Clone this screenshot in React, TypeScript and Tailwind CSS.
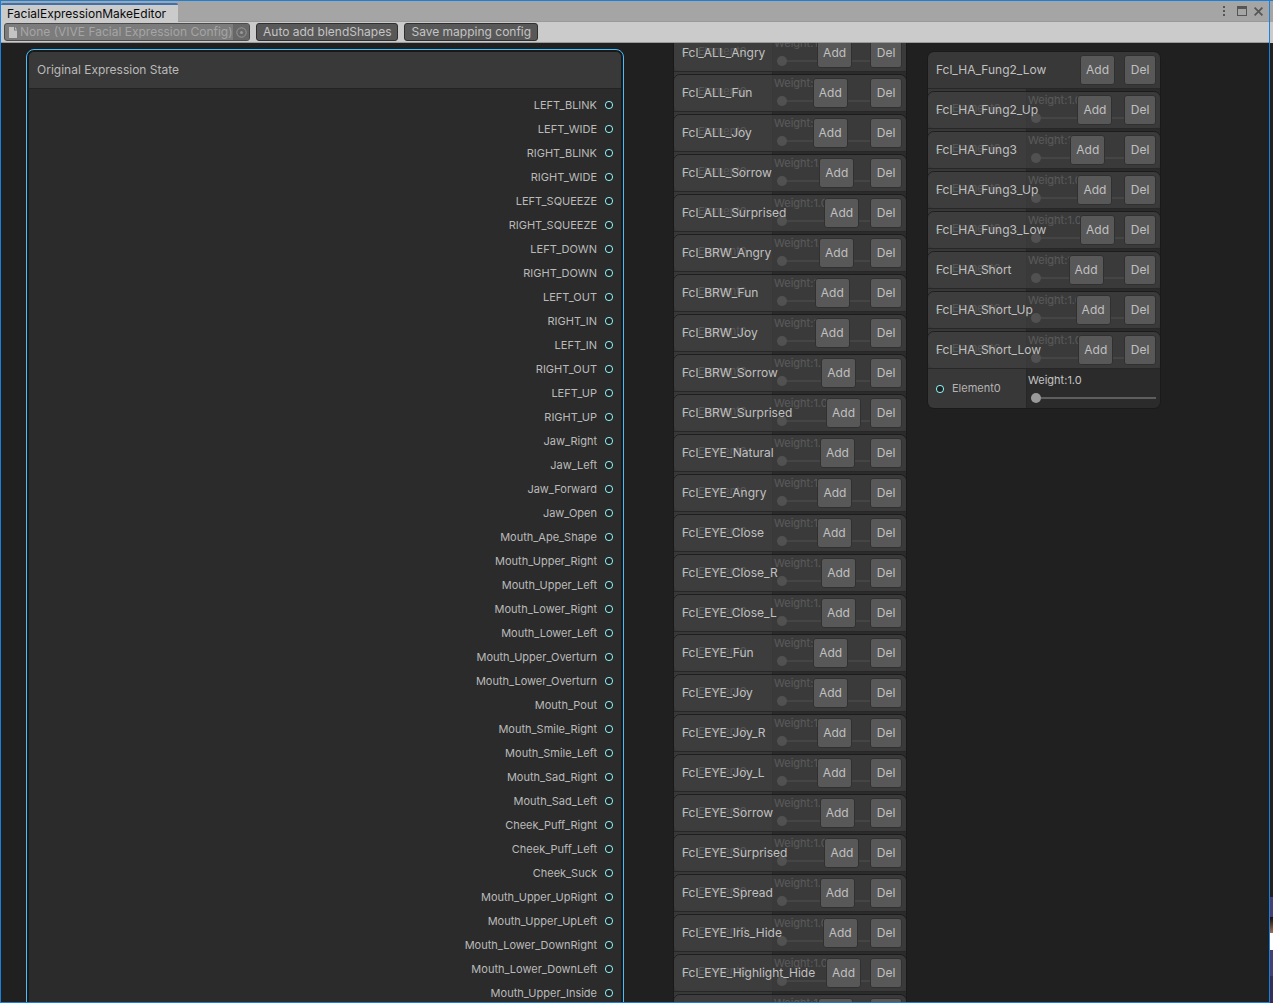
import React from "react";

const expressions = [
  "LEFT_BLINK",
  "LEFT_WIDE",
  "RIGHT_BLINK",
  "RIGHT_WIDE",
  "LEFT_SQUEEZE",
  "RIGHT_SQUEEZE",
  "LEFT_DOWN",
  "RIGHT_DOWN",
  "LEFT_OUT",
  "RIGHT_IN",
  "LEFT_IN",
  "RIGHT_OUT",
  "LEFT_UP",
  "RIGHT_UP",
  "Jaw_Right",
  "Jaw_Left",
  "Jaw_Forward",
  "Jaw_Open",
  "Mouth_Ape_Shape",
  "Mouth_Upper_Right",
  "Mouth_Upper_Left",
  "Mouth_Lower_Right",
  "Mouth_Lower_Left",
  "Mouth_Upper_Overturn",
  "Mouth_Lower_Overturn",
  "Mouth_Pout",
  "Mouth_Smile_Right",
  "Mouth_Smile_Left",
  "Mouth_Sad_Right",
  "Mouth_Sad_Left",
  "Cheek_Puff_Right",
  "Cheek_Puff_Left",
  "Cheek_Suck",
  "Mouth_Upper_UpRight",
  "Mouth_Upper_UpLeft",
  "Mouth_Lower_DownRight",
  "Mouth_Lower_DownLeft",
  "Mouth_Upper_Inside",
];

const faceShapes = [
  "Fcl_ALL_Neutral",
  "Fcl_ALL_Angry",
  "Fcl_ALL_Fun",
  "Fcl_ALL_Joy",
  "Fcl_ALL_Sorrow",
  "Fcl_ALL_Surprised",
  "Fcl_BRW_Angry",
  "Fcl_BRW_Fun",
  "Fcl_BRW_Joy",
  "Fcl_BRW_Sorrow",
  "Fcl_BRW_Surprised",
  "Fcl_EYE_Natural",
  "Fcl_EYE_Angry",
  "Fcl_EYE_Close",
  "Fcl_EYE_Close_R",
  "Fcl_EYE_Close_L",
  "Fcl_EYE_Fun",
  "Fcl_EYE_Joy",
  "Fcl_EYE_Joy_R",
  "Fcl_EYE_Joy_L",
  "Fcl_EYE_Sorrow",
  "Fcl_EYE_Surprised",
  "Fcl_EYE_Spread",
  "Fcl_EYE_Iris_Hide",
  "Fcl_EYE_Highlight_Hide",
  "Fcl_MTH_Close",
];

const teethShapes = [
  "Fcl_HA_Fung2_Low",
  "Fcl_HA_Fung2_Up",
  "Fcl_HA_Fung3",
  "Fcl_HA_Fung3_Up",
  "Fcl_HA_Fung3_Low",
  "Fcl_HA_Short",
  "Fcl_HA_Short_Up",
  "Fcl_HA_Short_Low",
];

function Port() {
  return (
    <svg className="size-2 shrink-0" viewBox="0 0 8 8" aria-hidden="true">
      <circle cx="4" cy="4" r="3.5" fill="#212121" stroke="#84e4e7" strokeWidth="1.1" />
    </svg>
  );
}

// Nodes are taller than their spacing, so each translucent header covers the previous node's body.
function ShapeNode({ name }: { name: string }) {
  return (
    <section className="relative -mb-[38px] overflow-hidden rounded-[7px] border border-[#191919]/80">
      <header className="flex h-[37px] items-center border-b border-[#232323]/80 bg-[#3f3f3f]/80 pr-1 pl-2 text-[#c0c0c0]">
        <h2 className="min-w-0 grow-2 pr-4 whitespace-nowrap">{name}</h2>
        <button
          type="button"
          className="h-[30px] w-[35px] shrink-0 rounded-[3px] border border-[#303030] bg-[#585858]"
        >
          Add
        </button>
        <div className="min-w-[9px] grow" />
        <button
          type="button"
          className="h-[30px] w-8 shrink-0 rounded-[3px] border border-[#303030] bg-[#585858]"
        >
          Del
        </button>
      </header>
      <div className="flex h-[39px]">
        <div className="flex w-[99px] shrink-0 items-center gap-2 border-r border-[#232323]/80 bg-[#3f3f3f]/80 pl-2 text-[11px] text-[#b4b4b4]">
          <Port />
          Element0
        </div>
        <label className="flex min-w-0 grow flex-col bg-[#2e2e2e]/80 pt-[3px] pr-1 pl-px text-[11px]">
          <span className="leading-4">Weight:1.0</span>
          <input
            type="range"
            min="1"
            max="10"
            defaultValue="1"
            className="mt-[5px] ml-[3px] h-[10px] min-w-0 appearance-none bg-transparent [&::-webkit-slider-runnable-track]:h-[2px] [&::-webkit-slider-runnable-track]:bg-[#5e5e5e] [&::-webkit-slider-thumb]:-mt-1 [&::-webkit-slider-thumb]:size-[10px] [&::-webkit-slider-thumb]:appearance-none [&::-webkit-slider-thumb]:rounded-full [&::-webkit-slider-thumb]:bg-[#999999]"
          />
        </label>
      </div>
    </section>
  );
}

function ToolbarButton({ children }: { children: React.ReactNode }) {
  return (
    <button
      type="button"
      className="h-[18px] rounded-[3px] border border-[#303030] bg-[#585858] px-[6px] leading-4 text-[#c4c4c4]"
    >
      {children}
    </button>
  );
}

export default function App() {
  return (
    <div className="flex h-screen overflow-hidden bg-[#202020] font-['Inter',sans-serif] text-[12px] text-[#c4c4c4]">
      <main className="flex min-w-0 grow flex-col border border-[#1a80d9]">
        <div className="flex h-[21px] shrink-0 items-end justify-between border-b border-[#999999] bg-[#a5a5a5]">
          <div role="tablist" className="-mb-px flex">
            <button
              type="button"
              role="tab"
              aria-selected="true"
              className="h-[19px] rounded-t-[2px] border-t-2 border-[#3a72b0] bg-[#cbcbcb] pr-3 pl-[6px] leading-4 text-[#090909]"
            >
              FacialExpressionMakeEditor
            </button>
          </div>
          <div className="flex h-full items-center pr-[6px] text-[#555555]">
            <button type="button" aria-label="Menu" className="mr-[11px]">
              <svg className="h-3 w-[4px]" viewBox="0 0 4 12" fill="currentColor">
                <path d="M1 1h2v2H1zM1 5h2v2H1zM1 9h2v2H1z" />
              </svg>
            </button>
            <button type="button" aria-label="Maximize" className="mr-[7px]">
              <svg className="h-[10px] w-[10px]" viewBox="0 0 10 10" fill="currentColor">
                <path fillRule="evenodd" d="M0 0h10v10H0zM1 3v6h8V3z" />
              </svg>
            </button>
            <button type="button" aria-label="Close">
              <svg className="size-[9px]" viewBox="0 0 9 9" fill="none" stroke="currentColor" strokeWidth="1.7">
                <path d="M.6.6l7.8 7.8M8.4.6L.6 8.4" />
              </svg>
            </button>
          </div>
        </div>

        <div className="flex h-[21px] shrink-0 items-center gap-[6px] border-b border-[#999999] bg-[#cbcbcb] pl-[3px]">
          <div className="flex h-[18px] w-[246px] items-center overflow-hidden rounded-[3px] border border-[#4c4c4c] bg-[#7c7c7c] pl-1 text-[#a5a5a5]">
            <svg className="mr-[3px] h-[11px] w-2 shrink-0" viewBox="0 0 8 11" fill="#c4c4c4" aria-hidden="true">
              <path d="M0 0h5v3.500h3V11H0zM6 0l2 2.500H6z" />
            </svg>
            <input
              readOnly
              aria-label="Facial expression config"
              value="None (VIVE Facial Expression Config)"
              className="h-4 min-w-0 grow bg-transparent leading-4 outline-none"
            />
            <button
              type="button"
              aria-label="Select config"
              className="flex h-4 w-4 shrink-0 items-center justify-center bg-[#676767]"
            >
              <svg className="size-[11px]" viewBox="0 0 11 11">
                <circle cx="5.500" cy="5.500" r="4.700" fill="none" stroke="#989898" />
                <circle cx="5.500" cy="5.500" r="1.500" fill="#989898" />
              </svg>
            </button>
          </div>
          <ToolbarButton>Auto add blendShapes</ToolbarButton>
          <ToolbarButton>Save mapping config</ToolbarButton>
        </div>

        <div className="flex min-h-0 grow items-start overflow-hidden pl-[25px]">
          <section className="mt-[6px] w-[598px] shrink-0 rounded-t-[8px] border border-[#44c0ff] bg-[#191919] p-[2px]">
            <div className="overflow-hidden rounded-t-[5px] bg-[#2b2b2b] text-[#bababa]">
              <header className="flex h-[37px] items-center border-b border-[#232323] bg-[#393939] pl-2">
                <h1>Original Expression State</h1>
              </header>
              <ul className="pt-1 pr-2 text-[11px]">
                {expressions.map((name) => (
                  <li key={name} className="flex h-6 items-center justify-end gap-2">
                    {name}
                    <Port />
                  </li>
                ))}
              </ul>
            </div>
          </section>

          <div className="-mt-[49px] ml-[49px] w-[234px] shrink-0">
            {faceShapes.map((name) => (
              <ShapeNode key={name} name={name} />
            ))}
          </div>

          <div className="mt-2 ml-5 w-[234px] shrink-0">
            {teethShapes.map((name) => (
              <ShapeNode key={name} name={name} />
            ))}
          </div>
        </div>
      </main>

      <aside className="flex w-[3px] shrink-0 flex-col border-t border-[#1a80d9]">
        <div className="h-[21px] bg-[#a5a5a5]" />
        <div className="h-[21px] bg-[#cbcbcb]" />
        <div className="grow" />
        <div className="h-5 bg-[#434078]" />
        <div className="h-4 bg-linear-to-b from-[#141010] to-[#a0705c]" />
        <div className="h-[17px] bg-white" />
        <div className="h-[26px] bg-[#434078]" />
        <div className="h-[27px] bg-[#33315c]" />
      </aside>
    </div>
  );
}
